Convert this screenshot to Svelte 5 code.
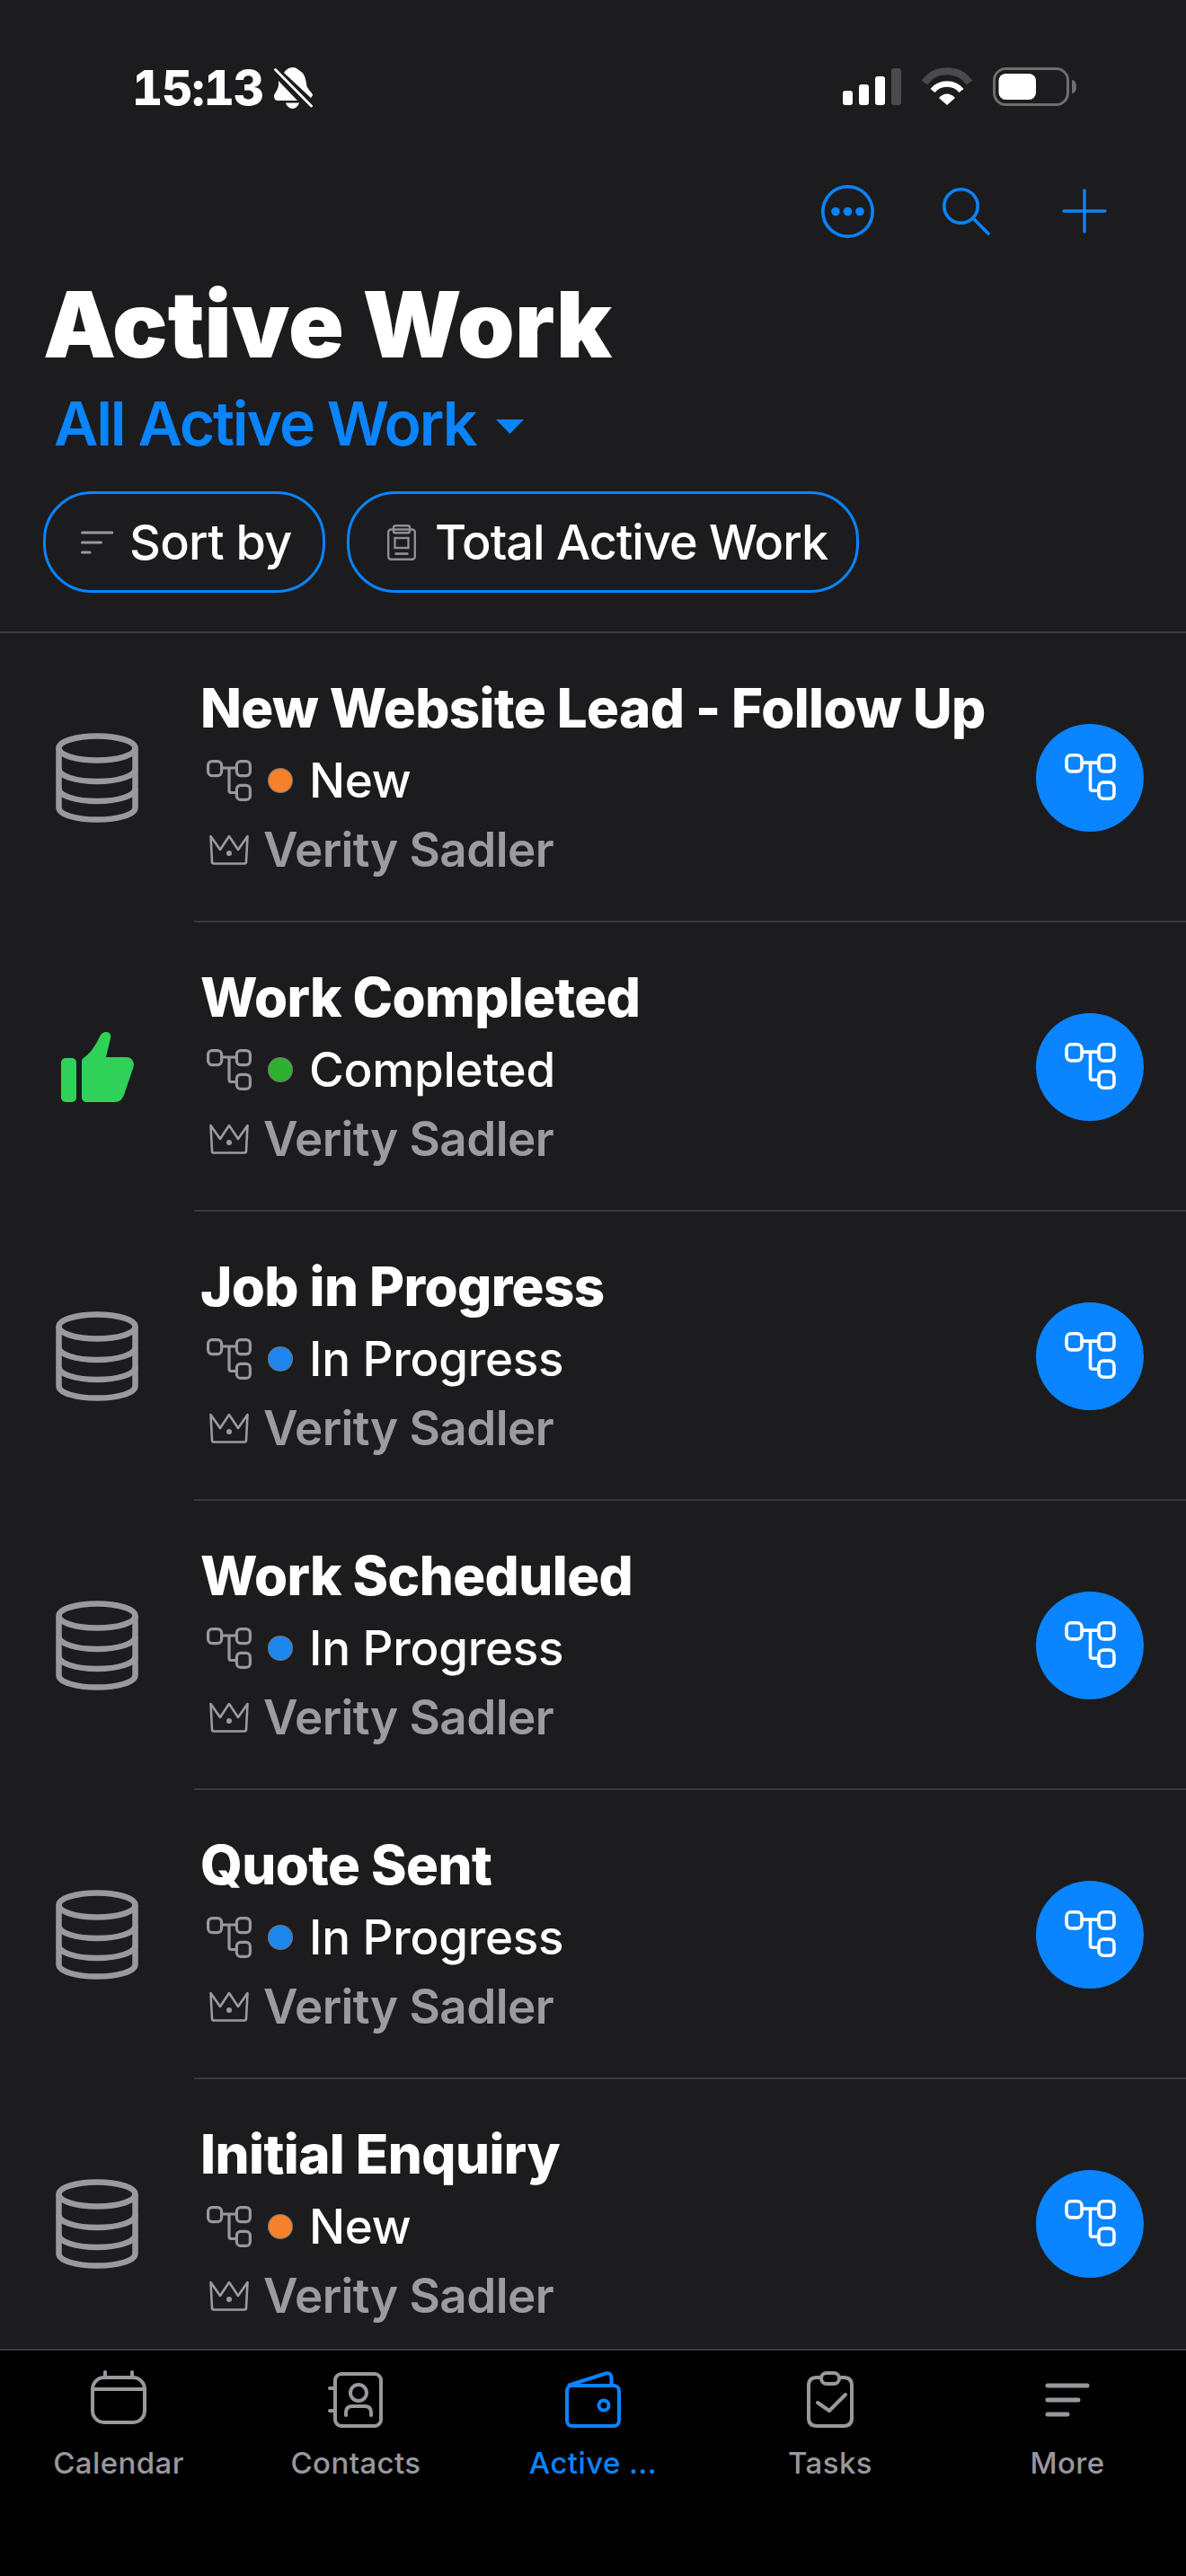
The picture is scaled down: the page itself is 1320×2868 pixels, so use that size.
<script>
  const rows = [
    { title: 'New Website Lead - Follow Up', status: 'New', dot: '#f5822a', icon: 'stack' },
    { title: 'Work Completed', status: 'Completed', dot: '#2fb12f', icon: 'thumb' },
    { title: 'Job in Progress', status: 'In Progress', dot: '#1c86ee', icon: 'stack' },
    { title: 'Work Scheduled', status: 'In Progress', dot: '#1c86ee', icon: 'stack' },
    { title: 'Quote Sent', status: 'In Progress', dot: '#1c86ee', icon: 'stack' },
    { title: 'Initial Enquiry', status: 'New', dot: '#f5822a', icon: 'stack' }
  ];
</script>

{#snippet flow(cls)}
  <svg class={cls} viewBox="0 0 50 46" fill="none" stroke="currentColor" stroke-width="3.2">
    <rect x="1.6" y="1.6" width="15" height="16" rx="4.5" />
    <rect x="33.4" y="1.6" width="15" height="16" rx="4.5" />
    <rect x="33.4" y="28.4" width="15" height="16" rx="4.5" />
    <path d="M16.6 9h16.8M25 9v25q0 2.5 2.5 2.5h5.900" />
  </svg>
{/snippet}

<div class="page">
  <div class="status">
    <div class="time">
      <span>15:13</span>
      <svg class="bell" viewBox="0 0 43 46" fill="#fff">
        <path d="M11 6C13 3 16 0 21.5 0C25 0 27 3 29 4C34 7 35 12 36 18C36 24 43 28 43 31L41 34Z" />
        <path d="M5 15L26 37H4C1 37 0 34 0 32C0 29 4 26 5 20Z" />
        <path d="M13 39.5H28C27 43 24 46 20.5 46C17 46 14 43 13 39.5Z" />
        <path d="M1.5 2.5L41.5 43" fill="none" stroke="#fff" stroke-width="2.8" stroke-linecap="round" />
      </svg>
    </div>
    <div class="sys">
      <svg class="signal" viewBox="0 0 65 41">
        <rect x="0" y="25" width="11" height="16" rx="3" fill="#fff" />
        <rect x="18" y="18" width="11" height="23" rx="3" fill="#fff" />
        <rect x="36" y="9" width="11" height="32" rx="3" fill="#fff" />
        <rect x="54" y="0" width="11" height="41" rx="3" fill="#4a4a4c" />
      </svg>
      <svg class="wifi" viewBox="0 0 58 42" fill="none">
        <path d="M4 17C16 0 42 0 54 17" stroke="#4a4a4c" stroke-width="8" />
        <path d="M13 26C21 16 37 16 45 26" stroke="#fff" stroke-width="6.5" />
        <path d="M20 34C25 28 33 28 38 34L29 42Z" fill="#fff" />
      </svg>
      <svg class="battery" viewBox="0 0 93 43">
        <rect x="1.5" y="1.5" width="82" height="40" rx="13" fill="none" stroke="#6e6e70" stroke-width="3" />
        <rect x="6.5" y="7" width="41.5" height="29" rx="8" fill="#fff" />
        <path d="M88 14c3 0 5 3 5 7.5s-2 7.5-5 7.5z" fill="#6e6e70" />
      </svg>
    </div>
  </div>

  <div class="actions">
    <svg class="more" viewBox="0 0 59 59" fill="none" stroke="currentColor" stroke-width="3.6">
      <circle cx="29.5" cy="29.5" r="27.7" />
      <circle cx="16" cy="29.5" r="4.8" fill="currentColor" stroke="none" />
      <circle cx="29.5" cy="29.5" r="4.8" fill="currentColor" stroke="none" />
      <circle cx="43" cy="29.5" r="4.8" fill="currentColor" stroke="none" />
    </svg>
    <svg class="search" viewBox="0 0 53 53" fill="none" stroke="currentColor" stroke-width="3.6" stroke-linecap="round">
      <circle cx="20.5" cy="20.5" r="18.7" />
      <path d="M34 34l17 17" />
    </svg>
    <svg class="plus" viewBox="0 0 50 50" fill="none" stroke="currentColor" stroke-width="3.4" stroke-linecap="round">
      <path d="M25 2v46M2 25h46" />
    </svg>
  </div>

  <h1>Active Work</h1>
  <div class="subtitle">
    <span>All Active Work</span>
    <svg class="caret" viewBox="0 0 31 16"><path d="M0 0h31L15.5 16z" fill="currentColor" /></svg>
  </div>

  <div class="chips">
    <div class="chip sort">
      <svg class="sort-icon" viewBox="0 0 36 26" fill="none" stroke="currentColor" stroke-width="3" stroke-linecap="round">
        <path d="M1.5 2H35M1.5 13H22.5M1.5 24H10" />
      </svg>
      <span>Sort by</span>
    </div>
    <div class="chip total">
      <svg class="clip-icon" viewBox="0 0 32 40" fill="none" stroke="currentColor" stroke-width="2.4">
        <rect x="1.2" y="5.5" width="29.6" height="33.3" rx="3" />
        <rect x="7" y="1.2" width="18" height="8" rx="2" />
        <rect x="8.5" y="15" width="15" height="11" />
        <path d="M8.5 32.5h15" stroke-width="2.8" />
      </svg>
      <span>Total Active Work</span>
    </div>
  </div>

  <div class="list">
    {#each rows as row}
      <div class="row">
        <div class="lead">
          {#if row.icon === 'stack'}
            <svg class="stack" viewBox="0 0 92 100" fill="none" stroke="currentColor" stroke-width="6.5">
              <ellipse cx="46" cy="17" rx="42.500" ry="13.500" />
              <path d="M3.500 17v66c0 8 19 13.500 42.500 13.500s42.500-5.500 42.500-13.500V17" />
              <path d="M3.500 40c0 8 19 14 42.500 14s42.500-6 42.500-14M3.500 62c0 8 19 14 42.500 14s42.500-6 42.500-14" />
            </svg>
          {:else}
            <svg class="thumb" viewBox="0 0 81 78" fill="#30d158">
              <rect x="0" y="29" width="17" height="49" rx="5" />
              <path d="M23 32Q23 30 25 29C33 23 39 14 43 5C45 1 48 0 50 0C54 0 56 3 55 7L50 28H73C79 28 82 34 80.5 39L70 70C68 75 65 78 60 78H29C25 78 23 76 23 72Z" />
            </svg>
          {/if}
        </div>
        <div class="body">
          <div class="title">{row.title}</div>
          <div class="line state">
            {@render flow('mini')}
            <span class="dot" style="background: {row.dot}"></span>
            <span>{row.status}</span>
          </div>
          <div class="line owner">
            <svg class="crown" viewBox="0 0 44 34" fill="none" stroke="currentColor" stroke-width="2.6" stroke-linejoin="round">
              <path d="M1.5 2L12 17L22 2L32 17L42.5 2L41 30.5q0 2-2 2H5q-2 0-2-2z" />
              <circle cx="22" cy="21" r="3" fill="currentColor" stroke="none" />
            </svg>
            <span>Verity Sadler</span>
          </div>
        </div>
        <div class="round">{@render flow('big')}</div>
      </div>
    {/each}
  </div>

  <nav class="tabs">
    <div class="tab">
      <svg class="tab-icon" viewBox="0 0 62 64" fill="none" stroke="currentColor" stroke-width="4" stroke-linecap="round">
        <rect x="2" y="8" width="58" height="50" rx="13" />
        <path d="M2 21h58M16 2v6M46 2v6" />
      </svg>
      <span>Calendar</span>
    </div>
    <div class="tab">
      <svg class="tab-icon" viewBox="0 0 62 64" fill="none" stroke="currentColor" stroke-width="4" stroke-linecap="round">
        <rect x="8" y="4" width="51" height="58" rx="7" />
        <path d="M2 20h6M2 45h6" />
        <circle cx="34" cy="25" r="9" />
        <path d="M20 50v-3c0-5 3-7 7-7h14c4 0 7 2 7 7v3" />
      </svg>
      <span>Contacts</span>
    </div>
    <div class="tab active">
      <svg class="tab-icon" viewBox="0 0 62 64" fill="none" stroke="currentColor" stroke-width="4" stroke-linejoin="round">
        <rect x="2" y="17" width="58" height="45" rx="6" />
        <path d="M3 17L45 3.500q6-1.500 6.500 4.500V17" />
        <circle cx="43" cy="39" r="5.500" />
      </svg>
      <span>Active ...</span>
    </div>
    <div class="tab">
      <svg class="tab-icon" viewBox="0 0 62 64" fill="none" stroke="currentColor" stroke-width="4" stroke-linecap="round" stroke-linejoin="round">
        <path d="M20 8h-4q-9 0-9 9v36q0 9 9 9h30q9 0 9-9V17q0-9-9-9h-4" />
        <rect x="21" y="3" width="20" height="12" rx="6" />
        <path d="M17 36l13 9 18-18" />
      </svg>
      <span>Tasks</span>
    </div>
    <div class="tab">
      <svg class="tab-icon" viewBox="0 0 62 64" fill="none" stroke="currentColor" stroke-width="5" stroke-linecap="round">
        <path d="M9 17h44M9 33h34M9 49h22" />
      </svg>
      <span>More</span>
    </div>
  </nav>
</div>

<style>
  :global(body) {
    margin: 0;
    background: #1c1c1e;
  }

  .page {
    width: 1320px;
    height: 2868px;
    background: #1c1c1e;
    color: #fff;
    font-family: Inter, "Liberation Sans", sans-serif;
    overflow: hidden;
    display: flex;
    flex-direction: column;
  }

  .status {
    display: flex;
    justify-content: space-between;
    height: 120px;
    padding: 73px 122px 0 147px;
    box-sizing: border-box;
  }

  .time {
    display: flex;
    gap: 12px;
    align-items: flex-start;
    font-size: 53px;
    font-weight: 800;
    line-height: 50px;
    font-variant-numeric: tabular-nums;
    letter-spacing: -1px;
  }

  .bell {
    width: 43px;
    height: 46px;
    margin-top: 2px;
  }

  .sys {
    display: flex;
    align-items: flex-start;
    gap: 22px;
    margin-top: 2px;
  }

  .signal { width: 65px; height: 41px; margin-top: 1px; }
  .wifi { width: 58px; height: 42px; }
  .battery { width: 93px; height: 43px; }

  .actions {
    display: flex;
    justify-content: flex-end;
    align-items: center;
    height: 60px;
    padding: 85px 88px 0 0;
    color: #0a84ff;
  }

  .more { width: 59px; height: 59px; }
  .search { width: 53px; height: 53px; margin-left: 76px; }
  .plus { width: 50px; height: 50px; margin-left: 80px; }

  h1 {
    margin: 48px 0 0 48px;
    font-size: 102px;
    line-height: 96px;
    font-weight: 900;
    letter-spacing: 0.2px;
  }

  .subtitle {
    display: flex;
    align-items: center;
    gap: 23px;
    margin: 26px 0 0 60px;
    color: #0a84ff;
    font-size: 68px;
    line-height: 72px;
    font-weight: 600;
    letter-spacing: -2.2px;
  }

  .caret {
    width: 31px;
    height: 16px;
    margin-top: 7px;
  }

  .chips {
    display: flex;
    gap: 24px;
    margin: 40px 0 0 48px;
  }

  .chip {
    display: flex;
    align-items: center;
    height: 113px;
    box-sizing: border-box;
    border: 3px solid #0a84ff;
    border-radius: 54px;
    font-size: 54px;
    font-weight: 500;
    letter-spacing: -0.7px;
  }

  .sort { width: 314px; padding-left: 39px; gap: 18px; }
  .total { width: 570px; padding-left: 42px; gap: 21px; letter-spacing: -1px; }

  .sort-icon {
    width: 36px;
    height: 26px;
    color: #98989d;
    flex: none;
  }

  .clip-icon {
    width: 32px;
    height: 40px;
    color: #8e8e93;
    flex: none;
  }

  .list {
    margin-top: 43px;
    border-top: 2px solid #3a3a3c;
    flex: 1;
    min-height: 0;
    overflow: hidden;
  }

  .row {
    display: flex;
    align-items: center;
    height: 322px;
    position: relative;
  }

  .row:not(:last-child)::after {
    content: "";
    position: absolute;
    left: 216px;
    right: 0;
    bottom: 0;
    height: 2px;
    background: #3a3a3c;
  }

  .lead {
    width: 223px;
    display: flex;
    justify-content: center;
    padding-right: 7px;
    box-sizing: border-box;
    flex: none;
    color: #9a9a9e;
  }

  .stack { width: 92px; height: 100px; }
  .thumb { width: 81px; height: 78px; }

  .body {
    flex: 1;
    min-width: 0;
    padding-top: 4px;
  }

  .title {
    font-size: 60px;
    line-height: 72px;
    font-weight: 800;
    letter-spacing: -0.6px;
    margin-bottom: 6px;
  }

  .line {
    display: flex;
    align-items: center;
    height: 77px;
    font-size: 53px;
    letter-spacing: -0.3px;
  }

  .state {
    font-weight: 500;
    margin-left: 7px;
  }

  .mini {
    width: 50px;
    height: 46px;
    color: #98989d;
    margin-right: 19px;
  }

  .dot {
    width: 26px;
    height: 26px;
    border-radius: 50%;
    box-shadow: 0 0 0 1px #777;
    margin-right: 19px;
  }

  .owner {
    color: #9c9c9e;
    font-weight: 600;
    gap: 16px;
    margin-left: 10px;
    letter-spacing: -0.6px;
  }

  .crown { width: 44px; height: 34px; }

  .round {
    width: 120px;
    height: 120px;
    border-radius: 50%;
    background: #0a84ff;
    color: #fff;
    display: flex;
    align-items: center;
    justify-content: center;
    margin-right: 47px;
    flex: none;
  }

  .big {
    width: 57px;
    height: 52px;
    margin-bottom: 2px;
  }

  .tabs {
    height: 253px;
    flex: none;
    box-sizing: border-box;
    background: #000;
    border-top: 2px solid #3a3a3c;
    display: grid;
    grid-template-columns: repeat(5, 264px);
    padding-top: 22px;
    color: #98989d;
  }

  .tab {
    display: flex;
    flex-direction: column;
    align-items: center;
    font-size: 33px;
    font-weight: 500;
    letter-spacing: 0.4px;
  }

  .tab span {
    margin-top: 19px;
    line-height: 40px;
  }

  .active { color: #0a84ff; }

  .tab-icon {
    width: 62px;
    height: 64px;
  }
</style>
